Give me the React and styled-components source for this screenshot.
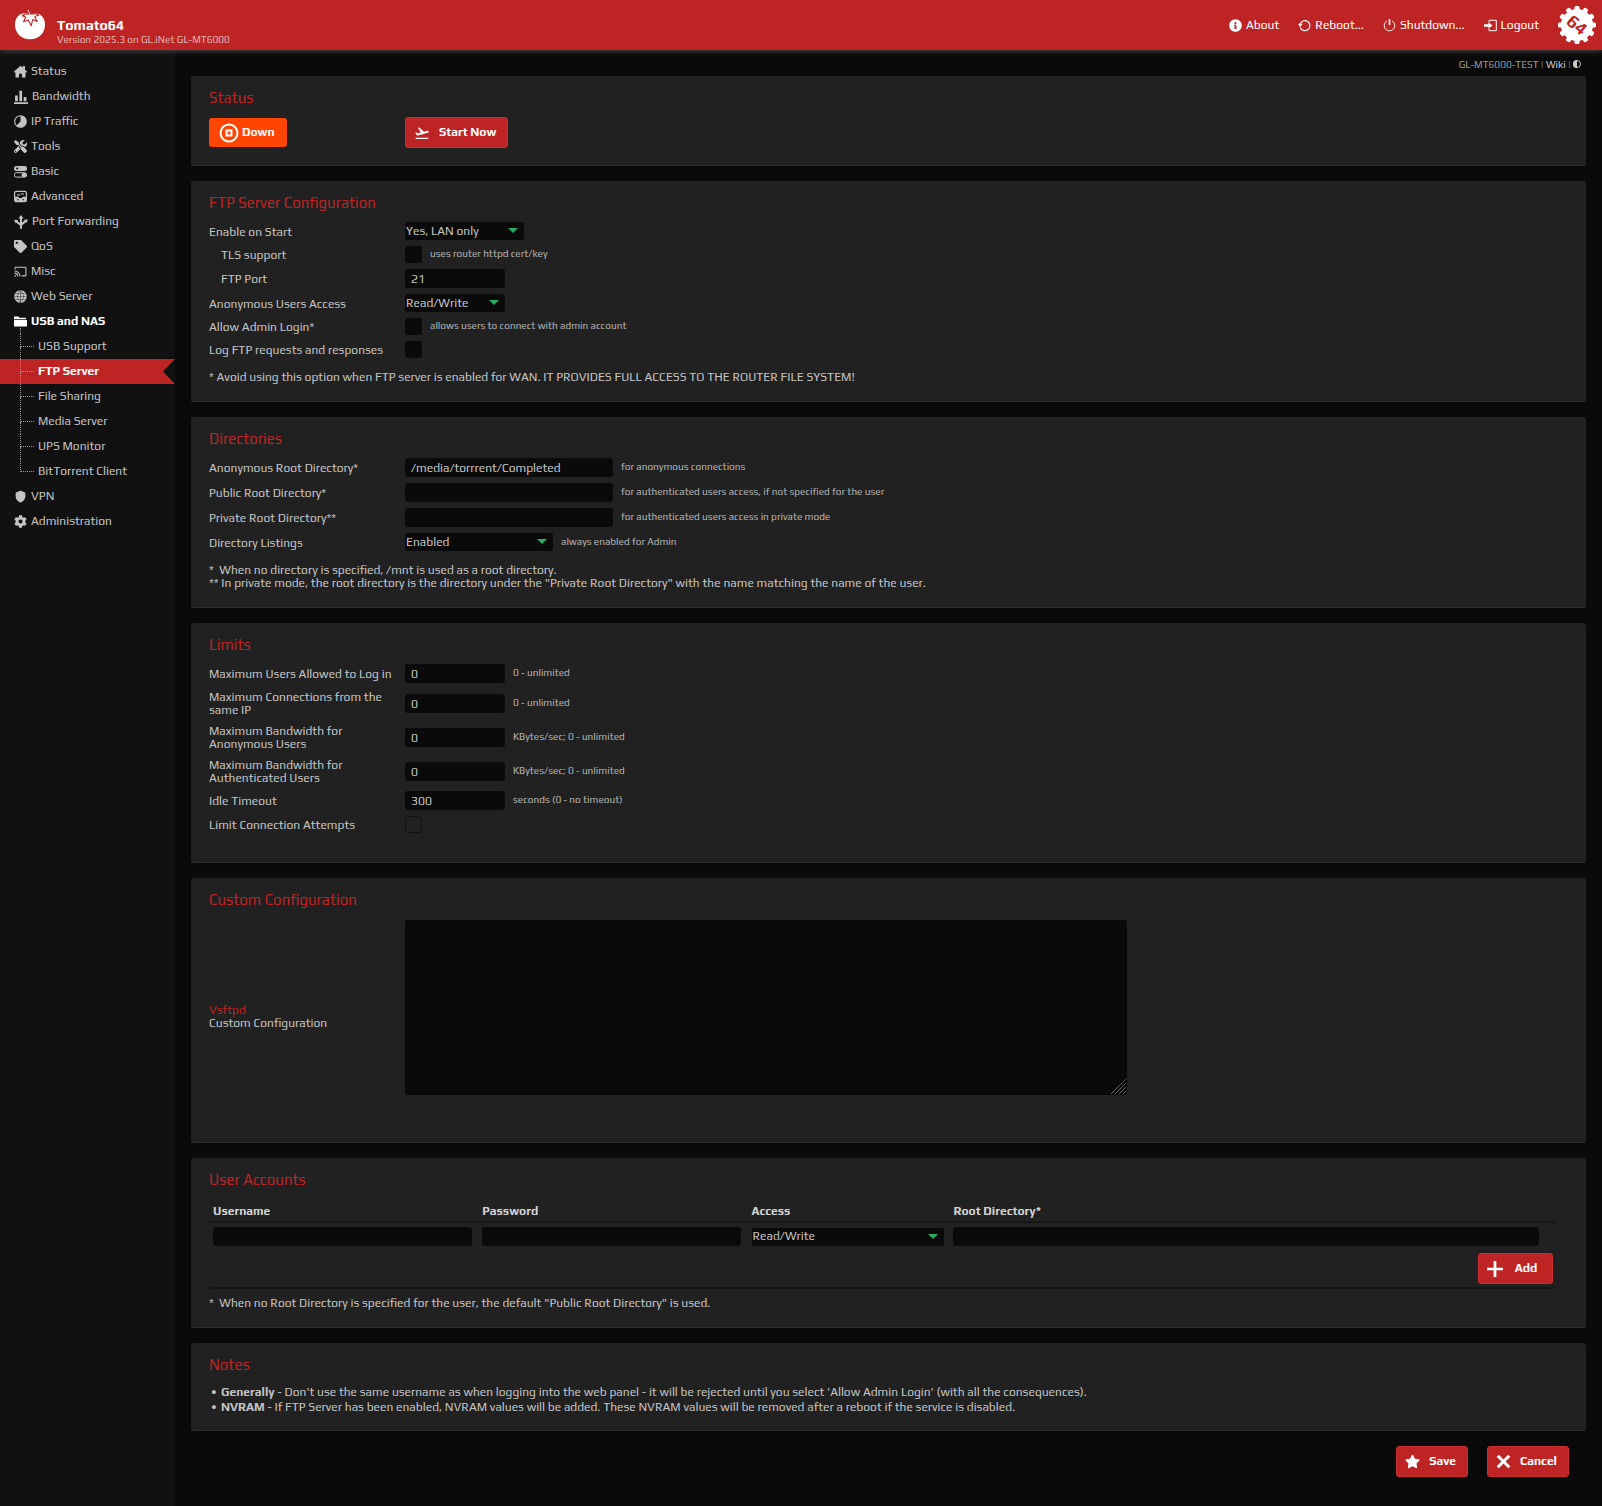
import React from 'react';
import styled, { createGlobalStyle, css } from 'styled-components';
import { FaTools, FaTag, FaCog, FaInfoCircle, FaStar } from 'react-icons/fa';
import { MdCast, MdShield, MdFlightTakeoff } from 'react-icons/md';

const RED = '#be2424';

const GlobalStyle = createGlobalStyle`
	*, *::before, *::after {
		box-sizing: border-box;
	}

	body {
		margin: 0;
		background: #0a0a0a;
		color: #c4c4c4;
		font-family: Play, Roboto, sans-serif;
		font-size: 12px;
		line-height: 13px;
	}

	input, select, textarea, button {
		font: inherit;
		color: inherit;
	}

	a {
		color: inherit;
		text-decoration: none;
	}
`;

/* ---------- header ---------- */

const Header = styled.header`
	position: relative;
	display: flex;
	align-items: center;
	height: 50px;
	padding: 0 6px 0 15px;
	background: ${RED};
	box-shadow: 0 1px 6px #4a4a4a;
`;

const Brand = styled.div`
	margin-left: 12px;
	padding-top: 14px;
	color: #dfb4b4;
	font-size: 10px;
	line-height: 12px;
`;

const BrandName = styled.a`
	display: block;
	margin-bottom: 2px;
	color: #fff;
	font-size: 14px;
	font-weight: 700;
	line-height: 14px;
`;

const TopNav = styled.nav`
	display: flex;
	align-items: center;
	gap: 19px;
	margin-left: auto;
	color: #fff;

	a {
		display: flex;
		align-items: center;
		gap: 4px;
	}
`;

/* ---------- sidebar ---------- */

const Body = styled.div`
	display: flex;
	min-height: calc(100vh - 50px);
`;

const Sidebar = styled.nav`
	flex: 0 0 175px;
	padding-top: 9px;
	background: #111;
`;

const Menu = styled.ul`
	margin: 0;
	padding: 0;
	list-style: none;
`;

const MenuLink = styled.a`
	display: flex;
	align-items: center;
	gap: 4px;
	height: 25px;
	padding-left: 14px;
	color: ${({ $open }) => ($open ? '#fff' : '#c4c4c4')};
	font-weight: ${({ $open }) => ($open ? 700 : 400)};
`;

const Submenu = styled(Menu)`
	&::before {
		content: '';
		display: block;
		height: 6px;
		margin: -6px 0 0 20px;
		border-left: 1px dotted #999;
	}
`;

const SubLink = styled.a`
	display: flex;
	align-items: center;
	gap: 4px;
	height: 25px;
	padding-left: 20px;
	${({ $active }) =>
		$active &&
		css`
			background: ${RED};
			color: #fff;
			font-weight: 700;
			clip-path: polygon(0 0, 100% 0, calc(100% - 12px) 50%, 100% 100%, 0 100%);
		`};
`;

const Branch = styled.span`
	align-self: stretch;
	width: 14px;

	&::before,
	&::after {
		content: '';
		display: block;
		height: 12px;
		border-left: 1px dotted #999;
	}

	&::before {
		height: 13px;
		border-bottom: 1px dotted #999;
	}

	&::after {
		display: ${({ $last }) => ($last ? 'none' : 'block')};
	}
`;

/* ---------- content ---------- */

const Main = styled.main`
	flex: 1;
	min-width: 0;
	padding: 0 16px 28px;
`;

const Ident = styled.div`
	display: flex;
	justify-content: flex-end;
	align-items: center;
	gap: 2px;
	height: 26px;
	padding: 2px 5px 0 0;
	color: #999;
	font-size: 10px;

	a {
		color: #ccc;
	}
`;

const Card = styled.section`
	margin-bottom: 15px;
	padding: 13px 17px 14px 18px;
	border-bottom: 1px solid #2d2d2d;
	border-radius: 2px;
	background: #212121;
`;

const CardTitle = styled.h2`
	margin: 0 0 7px;
	color: ${RED};
	font-size: 15px;
	font-weight: 400;
	line-height: 18px;
`;

const Form = styled.div`
	padding-bottom: ${({ $tail }) => ($tail ? 12 : 0)}px;
`;

const Row = styled.div`
	display: grid;
	grid-template-columns: 196px 1fr;
	align-items: center;
	padding: 3px 0;
`;

const Label = styled.label`
	padding: 2px 8px 0 ${({ $nested }) => ($nested ? 12 : 0)}px;
`;

const Field = styled.div`
	display: flex;
	align-items: center;
	gap: 8px;
`;

const Hint = styled.small`
	padding-bottom: 2px;
	color: #b4b4b4;
	font-size: 10px;
`;

const Note = styled.div`
	padding: ${({ $top }) => $top || 10}px 0 3px;
	white-space: pre-wrap;
`;

const inputBox = css`
	border: 0;
	border-radius: 3px;
	background: #0a0a0a;
	color: #c4c4c4;
`;

const TextInput = styled.input`
	${inputBox};
	width: ${({ $w }) => $w || '100px'};
	height: 19px;
	padding: 1px 6px 0;
`;

const Check = styled.input.attrs({ type: 'checkbox' })`
	${inputBox};
	appearance: none;
	width: 17px;
	height: 17px;
	margin: 0;

	&:disabled {
		border: 1px solid #111;
		background: transparent;
	}
`;

const SelectBox = styled.span`
	position: relative;
	display: block;
	width: ${({ $w }) => $w};

	&::after {
		content: '';
		position: absolute;
		top: 6px;
		right: 6px;
		border: 5px solid transparent;
		border-top: 5px solid #27ae60;
		border-bottom: 0;
		pointer-events: none;
	}

	select {
		${inputBox};
		appearance: none;
		display: block;
		width: 100%;
		height: 18px;
		padding: 0 1px;
	}
`;

const AreaBox = styled.div`
	position: relative;
	width: 62%;
	margin: 1px 0 18px;

	svg {
		position: absolute;
		right: 1px;
		bottom: 1px;
		pointer-events: none;
	}
`;

const Area = styled.textarea`
	${inputBox};
	display: block;
	width: 100%;
	height: 175px;
	resize: vertical;

	&::-webkit-resizer {
		background: transparent;
	}
`;

const Accent = styled.a`
	display: block;
	color: ${RED};
`;

const Badge = styled.span`
	display: inline-flex;
	align-items: center;
	gap: 3px;
	height: 29px;
	padding: 0 12px 0 10px;
	border-radius: 3px;
	background: #ff4500;
	color: #fff;
	font-weight: 700;
`;

const Button = styled.button`
	display: inline-flex;
	align-items: center;
	gap: ${({ $gap }) => $gap || 9}px;
	height: 31px;
	padding: 0 ${({ $end }) => $end || 11}px 0 8px;
	border: 1px solid #cb3030;
	border-radius: 3px;
	background: ${RED};
	color: #fff;
	font-weight: 700;
`;

const Table = styled.table`
	width: 99%;
	border-collapse: collapse;
	table-layout: fixed;

	th {
		height: 26px;
		padding: 5px 4px 0;
		border-bottom: 2px solid #161616;
		color: #d4d4d4;
		font-weight: 700;
		text-align: left;
	}

	td {
		padding: 4px;
	}

	tfoot td {
		padding: 3px 2px;
		border-bottom: 2px solid #161616;
		text-align: right;
	}

	button {
		vertical-align: top;
	}
`;

const NoteList = styled.ul`
	margin: 11px 0 1px;
	padding: 0;
	list-style: none;
	line-height: 15px;

	li::before {
		content: '•';
		display: inline-block;
		width: 12px;
		padding-left: 2px;
	}
`;

const Actions = styled.div`
	display: flex;
	justify-content: flex-end;
	gap: 19px;
	padding-right: 17px;
`;

/* ---------- drawings ---------- */

const Glyph = ({ size = 13, children, ...rest }) => (
	<svg width={size} height={size} viewBox="0 0 13 13" fill="currentColor" aria-hidden="true" {...rest}>
		{children}
	</svg>
);

const Line = ({ w = 1, ...rest }) => <path fill="none" stroke="currentColor" strokeWidth={w} {...rest} />;

const House = () => (
	<Glyph>
		<path d="M6.500 .8L8.800 2.800V1H11v3.800l2 1.800-.6.800h-.9V12.400H8V8.800H5v3.600H1.500V7.400H.6L0 6.600z" />
	</Glyph>
);

const Bars = () => (
	<Glyph size={14}>
		<path d="M0 11.4h13V13H0zM1 5h2.500v5.400H1zM5 .8h2.500v9.600H5zM9 6.500h2.500v3.900H9z" />
	</Glyph>
);

const Pie = () => (
	<Glyph>
		<circle cx="6.5" cy="6.5" r="5.8" fill="none" stroke="currentColor" strokeWidth="1.1" />
		<path d="M6.5.7a5.8 5.8 0 1 1-4.1 9.9L6.5 6.5z" />
	</Glyph>
);

const Toggles = () => (
	<Glyph>
		<rect y="1" width="13" height="5" rx="2.2" />
		<circle cx="3.2" cy="3.5" r="1.1" fill="#111" />
		<Line d="M2.4 7.7h8.2a2 2 0 0 1 0 4.4H2.4a2 2 0 0 1 0-4.4z" w={1} />
		<rect x="7.5" y="8" width="5" height="4" rx="2" />
	</Glyph>
);

const Drive = () => (
	<Glyph>
		<Line d="M2.4 1.3h8.2q1.8 0 1.8 1.8v6.8q0 1.8-1.8 1.8H2.4Q.6 11.700.6 9.900V3.100Q.6 1.300 2.400 1.300z" w={1.2} />
		<path d="M.6 6.800h3.600l.9 1.200h2.800l.9-1.200h3.600v4.400H.6zM3 4.600h3v1H3zM6.500 3.600h3.500v1H6.500z" />
		<path fill="#111" d="M3 9.200h1.600v1.100H3zM8.400 9.200H10v1.100H8.400z" />
	</Glyph>
);

const Fork = () => (
	<Glyph size={14}>
		<Line d="M6.500 12.800V9.300L2.300 6.200M6.500 9.300V2.500M6.500 9.300l4.200-3.600" w={1.9} />
		<path d="M6.500 0l2.400 3.300H4.100zM0 4.500l3.900.1-2.200 3.200zM13 4.200l-3.900.2 2.400 3.100z" />
	</Glyph>
);

const Globe = () => (
	<Glyph>
		<circle cx="6.500" cy="6.500" r="6.300" />
		<path
			fill="none"
			stroke="#333"
			strokeWidth=".5"
			d="M6.500.4v12.200M.4 6.500h12.200M1.400 3.500h10.200M1.400 9.500h10.200M6.500.4c-4 3.500-4 8.700 0 12.200c4-3.500 4-8.700 0-12.200"
		/>
	</Glyph>
);

const Folder = () => (
	<Glyph>
		<path d="M0 1.500h4.500l1 1.300H12v1.400H0zM0 5h13v6.500H0z" />
	</Glyph>
);

const Reload = () => (
	<Glyph>
		<Line d="M2.100 5.400a5 5 0 1 1 .2 3.200" w={1.200} />
		<path d="M0 4.800h4.600L2.200 8z" />
	</Glyph>
);

const Power = () => (
	<Glyph>
		<Line d="M4 1.900a5.300 5.300 0 1 0 5 0" w={1} />
		<path d="M5.700 0h1.600v6.200H5.700z" />
	</Glyph>
);

const Exit = () => (
	<Glyph>
		<Line d="M5 3.200V1.300h7.300v10.400H5V9.800" w={1} />
		<path d="M0 5.200h4.500V3.200L8.500 6.500 4.500 9.800V7.800H0z" />
	</Glyph>
);

const Stop = () => (
	<Glyph size={20}>
		<circle cx="6.500" cy="6.500" r="5.500" fill="none" stroke="currentColor" strokeWidth="1.300" />
		<Line d="M4.900 4.900h3.200v3.200H4.900z" w={1.300} />
	</Glyph>
);

const Plus = () => (
	<Glyph size={16}>
		<path d="M5.400 0h2.200v5.400H13v2.200H7.600V13H5.400V7.600H0V5.400h5.400z" />
	</Glyph>
);

const Cross = () => (
	<Glyph size={15}>
		<Line d="M1.500 1.500l10 10M11.500 1.500l-10 10" w={2.600} />
	</Glyph>
);

const Contrast = () => (
	<Glyph size={8}>
		<circle cx="6.500" cy="6.500" r="5.700" fill="none" stroke="#ccc" strokeWidth="1.500" />
		<path fill="#ccc" d="M6.500 0a6.500 6.500 0 0 0 0 13z" />
	</Glyph>
);

const Grip = () => (
	<svg width="15" height="15" viewBox="0 0 15 15" aria-hidden="true">
		<path d="M0 15L15 0M4 15L15 4M8 15l7-7M12 15l3-3" stroke="#999" strokeDasharray="1 .5" />
	</svg>
);

const Tomato = () => (
	<svg width="30" height="30" viewBox="0 0 30 30" aria-hidden="true">
		<path
			fill="#fff"
			d="M8 3.500C3 4.500 0 9 0 14.500 0 23.500 6.500 29.300 15 29.300S30 23.500 30 14.500C30 9 27 4.500 22 3.500c-2-.5-4-.3-6 .5-2.500-1-5-1.200-8-.5z"
		/>
		<path fill="#fff" d="M12.300.6l1.500-.6 1.700 4-1.500.5z" />
		<path
			fill="none"
			stroke={RED}
			strokeWidth="1.100"
			strokeLinejoin="round"
			d="M12.300.5l1.700 3.800C11.500 3.500 9 4 7.200 5.900c1.600 0 2.800.4 3.600 1.200L8.500 11.800l4.700-1.700 3.100 5.600 1.400-6.200 4.600 2-2.600-4.600c.9-.9 2.200-1.400 4-1.400-2-2-4.800-2.300-7.700-1.200L14.200 0"
		/>
	</svg>
);

const TEETH = [0, 30, 60, 90, 120, 150, 180, 210, 240, 270, 300, 330];

const Gear64 = () => (
	<svg width="38" height="38" viewBox="0 0 38 38" role="img" aria-label="Tomato64">
		<circle cx="19" cy="19" r="16" fill="#fff" />
		{TEETH.map(deg => (
			<rect key={deg} x="16.500" y="0" width="5" height="7" rx="1.500" fill="#fff" transform={`rotate(${deg} 19 19)`} />
		))}
		<text
			x="19"
			y="25"
			textAnchor="middle"
			fontFamily="Play, Roboto, sans-serif"
			fontSize="18"
			fontWeight="700"
			fill={RED}
			transform="rotate(40 19 19)"
		>
			64
		</text>
	</svg>
);

/* ---------- data ---------- */

const MENU = [
	{ text: 'Status', icon: <House /> },
	{ text: 'Bandwidth', icon: <Bars /> },
	{ text: 'IP Traffic', icon: <Pie /> },
	{ text: 'Tools', icon: <FaTools size={13} /> },
	{ text: 'Basic', icon: <Toggles /> },
	{ text: 'Advanced', icon: <Drive /> },
	{ text: 'Port Forwarding', icon: <Fork /> },
	{ text: 'QoS', icon: <FaTag size={13} /> },
	{ text: 'Misc', icon: <MdCast size={13} /> },
	{ text: 'Web Server', icon: <Globe /> },
	{
		text: 'USB and NAS',
		icon: <Folder />,
		items: ['USB Support', 'FTP Server', 'File Sharing', 'Media Server', 'UPS Monitor', 'BitTorrent Client']
	},
	{ text: 'VPN', icon: <MdShield size={13} /> },
	{ text: 'Administration', icon: <FaCog size={13} /> }
];

const LIMITS = [
	{ id: 'max', label: 'Maximum Users Allowed to Log in', value: '0', hint: '0 - unlimited' },
	{ id: 'ipmax', label: 'Maximum Connections from the same IP', value: '0', hint: '0 - unlimited' },
	{ id: 'anonrate', label: 'Maximum Bandwidth for Anonymous Users', value: '0', hint: 'KBytes/sec; 0 - unlimited' },
	{ id: 'rate', label: 'Maximum Bandwidth for Authenticated Users', value: '0', hint: 'KBytes/sec; 0 - unlimited' },
	{ id: 'idle', label: 'Idle Timeout', value: '300', hint: 'seconds (0 - no timeout)' }
];

const DIRS = [
	{ id: 'anonroot', label: 'Anonymous Root Directory*', value: '/media/torrrent/Completed', hint: 'for anonymous connections' },
	{ id: 'pubroot', label: 'Public Root Directory*', value: '', hint: 'for authenticated users access, if not specified for the user' },
	{ id: 'pvtroot', label: 'Private Root Directory**', value: '', hint: 'for authenticated users access in private mode' }
];

/* ---------- parts ---------- */

const FormRow = ({ id, label, nested, hint, children }) => (
	<Row>
		<Label htmlFor={id} $nested={nested}>
			{label}
		</Label>
		<Field>
			{children}
			{hint && <Hint>{hint}</Hint>}
		</Field>
	</Row>
);

const Select = ({ width, options, ...rest }) => (
	<SelectBox $w={width}>
		<select {...rest}>
			{options.map(option => (
				<option key={option}>{option}</option>
			))}
		</select>
	</SelectBox>
);

const SideMenu = () => (
	<Sidebar>
		<Menu>
			{MENU.map(({ text, icon, items }) => (
				<li key={text}>
					<MenuLink href="#" $open={!!items}>
						{icon}
						{text}
					</MenuLink>
					{items && (
						<Submenu>
							{items.map((item, i) => (
								<li key={item}>
									<SubLink href="#" $active={item === 'FTP Server'}>
										<Branch $last={i === items.length - 1} />
										{item}
									</SubLink>
								</li>
							))}
						</Submenu>
					)}
				</li>
			))}
		</Menu>
	</Sidebar>
);

export default function App() {
	return (
		<>
			<GlobalStyle />
			<Header>
				<Tomato />
				<Brand>
					<BrandName href="#">Tomato64</BrandName>
					Version 2025.3 on GL.iNet GL-MT6000
				</Brand>
				<TopNav>
					<a href="#">
						<FaInfoCircle size={13} />
						About
					</a>
					<a href="#">
						<Reload />
						Reboot...
					</a>
					<a href="#">
						<Power />
						Shutdown...
					</a>
					<a href="#">
						<Exit />
						Logout
					</a>
					<Gear64 />
				</TopNav>
			</Header>
			<Body>
				<SideMenu />
				<Main>
					<Ident>
						<span>GL-MT6000-TEST</span>|<a href="#">Wiki</a>|
						<Contrast />
					</Ident>

					<Card>
						<CardTitle>Status</CardTitle>
						<Row>
							<Field>
								<Badge>
									<Stop />
									Down
								</Badge>
							</Field>
							<Field>
								<Button type="button">
									<MdFlightTakeoff size={16} />
									Start Now
								</Button>
							</Field>
						</Row>
					</Card>

					<Card>
						<CardTitle>FTP Server Configuration</CardTitle>
						<Form>
							<FormRow id="enable" label="Enable on Start">
								<Select id="enable" width="119px" options={['Yes, LAN only', 'No', 'Yes, WAN and LAN']} />
							</FormRow>
							<FormRow id="tls" label="TLS support" nested hint="uses router httpd cert/key">
								<Check id="tls" />
							</FormRow>
							<FormRow id="port" label="FTP Port" nested>
								<TextInput id="port" defaultValue="21" />
							</FormRow>
							<FormRow id="anon" label="Anonymous Users Access">
								<Select id="anon" width="100px" options={['Read/Write', 'Disabled', 'Read Only']} />
							</FormRow>
							<FormRow id="super" label="Allow Admin Login*" hint="allows users to connect with admin account">
								<Check id="super" />
							</FormRow>
							<FormRow id="log" label="Log FTP requests and responses">
								<Check id="log" />
							</FormRow>
						</Form>
						<Note>* Avoid using this option when FTP server is enabled for WAN. IT PROVIDES FULL ACCESS TO THE ROUTER FILE SYSTEM!</Note>
					</Card>

					<Card>
						<CardTitle>Directories</CardTitle>
						<Form>
							{DIRS.map(({ id, label, value, hint }) => (
								<FormRow key={id} id={id} label={label} hint={hint}>
									<TextInput id={id} $w="208px" defaultValue={value} />
								</FormRow>
							))}
							<FormRow id="dirlist" label="Directory Listings" hint="always enabled for Admin">
								<Select id="dirlist" width="148px" options={['Enabled', 'Disabled']} />
							</FormRow>
						</Form>
						<Note>
							{'*  When no directory is specified, /mnt is used as a root directory.\n'}
							{'** In private mode, the root directory is the directory under the "Private Root Directory" with the name matching the name of the user.'}
						</Note>
					</Card>

					<Card>
						<CardTitle>Limits</CardTitle>
						<Form $tail>
							{LIMITS.map(({ id, label, value, hint }) => (
								<FormRow key={id} id={id} label={label} hint={hint}>
									<TextInput id={id} defaultValue={value} />
								</FormRow>
							))}
							<FormRow id="attempts" label="Limit Connection Attempts">
								<Check id="attempts" disabled />
							</FormRow>
						</Form>
					</Card>

					<Card>
						<CardTitle>Custom Configuration</CardTitle>
						<Form $tail>
							<Row>
								<Label htmlFor="custom">
									<Accent href="#">Vsftpd</Accent>
									Custom Configuration
								</Label>
								<AreaBox>
									<Area id="custom" />
									<Grip />
								</AreaBox>
							</Row>
						</Form>
					</Card>

					<Card>
						<CardTitle>User Accounts</CardTitle>
						<Table>
							<colgroup>
								<col width="20%" />
								<col width="20%" />
								<col width="15%" />
								<col width="45%" />
							</colgroup>
							<thead>
								<tr>
									<th>Username</th>
									<th>Password</th>
									<th>Access</th>
									<th>Root Directory*</th>
								</tr>
							</thead>
							<tbody>
								<tr>
									<td>
										<TextInput $w="99%" aria-label="Username" />
									</td>
									<td>
										<TextInput $w="99%" aria-label="Password" />
									</td>
									<td>
										<Select width="99%" aria-label="Access" options={['Read/Write', 'Read Only', 'View Only', 'Private']} />
									</td>
									<td>
										<TextInput $w="98%" aria-label="Root Directory" />
									</td>
								</tr>
							</tbody>
							<tfoot>
								<tr>
									<td colSpan={4}>
										<Button type="button" $gap={12} $end={15}>
											<Plus />
											Add
										</Button>
									</td>
								</tr>
							</tfoot>
						</Table>
						<Note $top={8}>{'*  When no Root Directory is specified for the user, the default "Public Root Directory" is used.'}</Note>
					</Card>

					<Card>
						<CardTitle>Notes</CardTitle>
						<NoteList>
							<li>
								<b>Generally</b> - Don't use the same username as when logging into the web panel - it will be rejected until you select
								'Allow Admin Login' (with all the consequences).
							</li>
							<li>
								<b>NVRAM</b> - If FTP Server has been enabled, NVRAM values will be added. These NVRAM values will be removed after a
								reboot if the service is disabled.
							</li>
						</NoteList>
					</Card>

					<Actions>
						<Button type="button">
							<FaStar size={15} />
							Save
						</Button>
						<Button type="button">
							<Cross />
							Cancel
						</Button>
					</Actions>
				</Main>
			</Body>
		</>
	);
}
